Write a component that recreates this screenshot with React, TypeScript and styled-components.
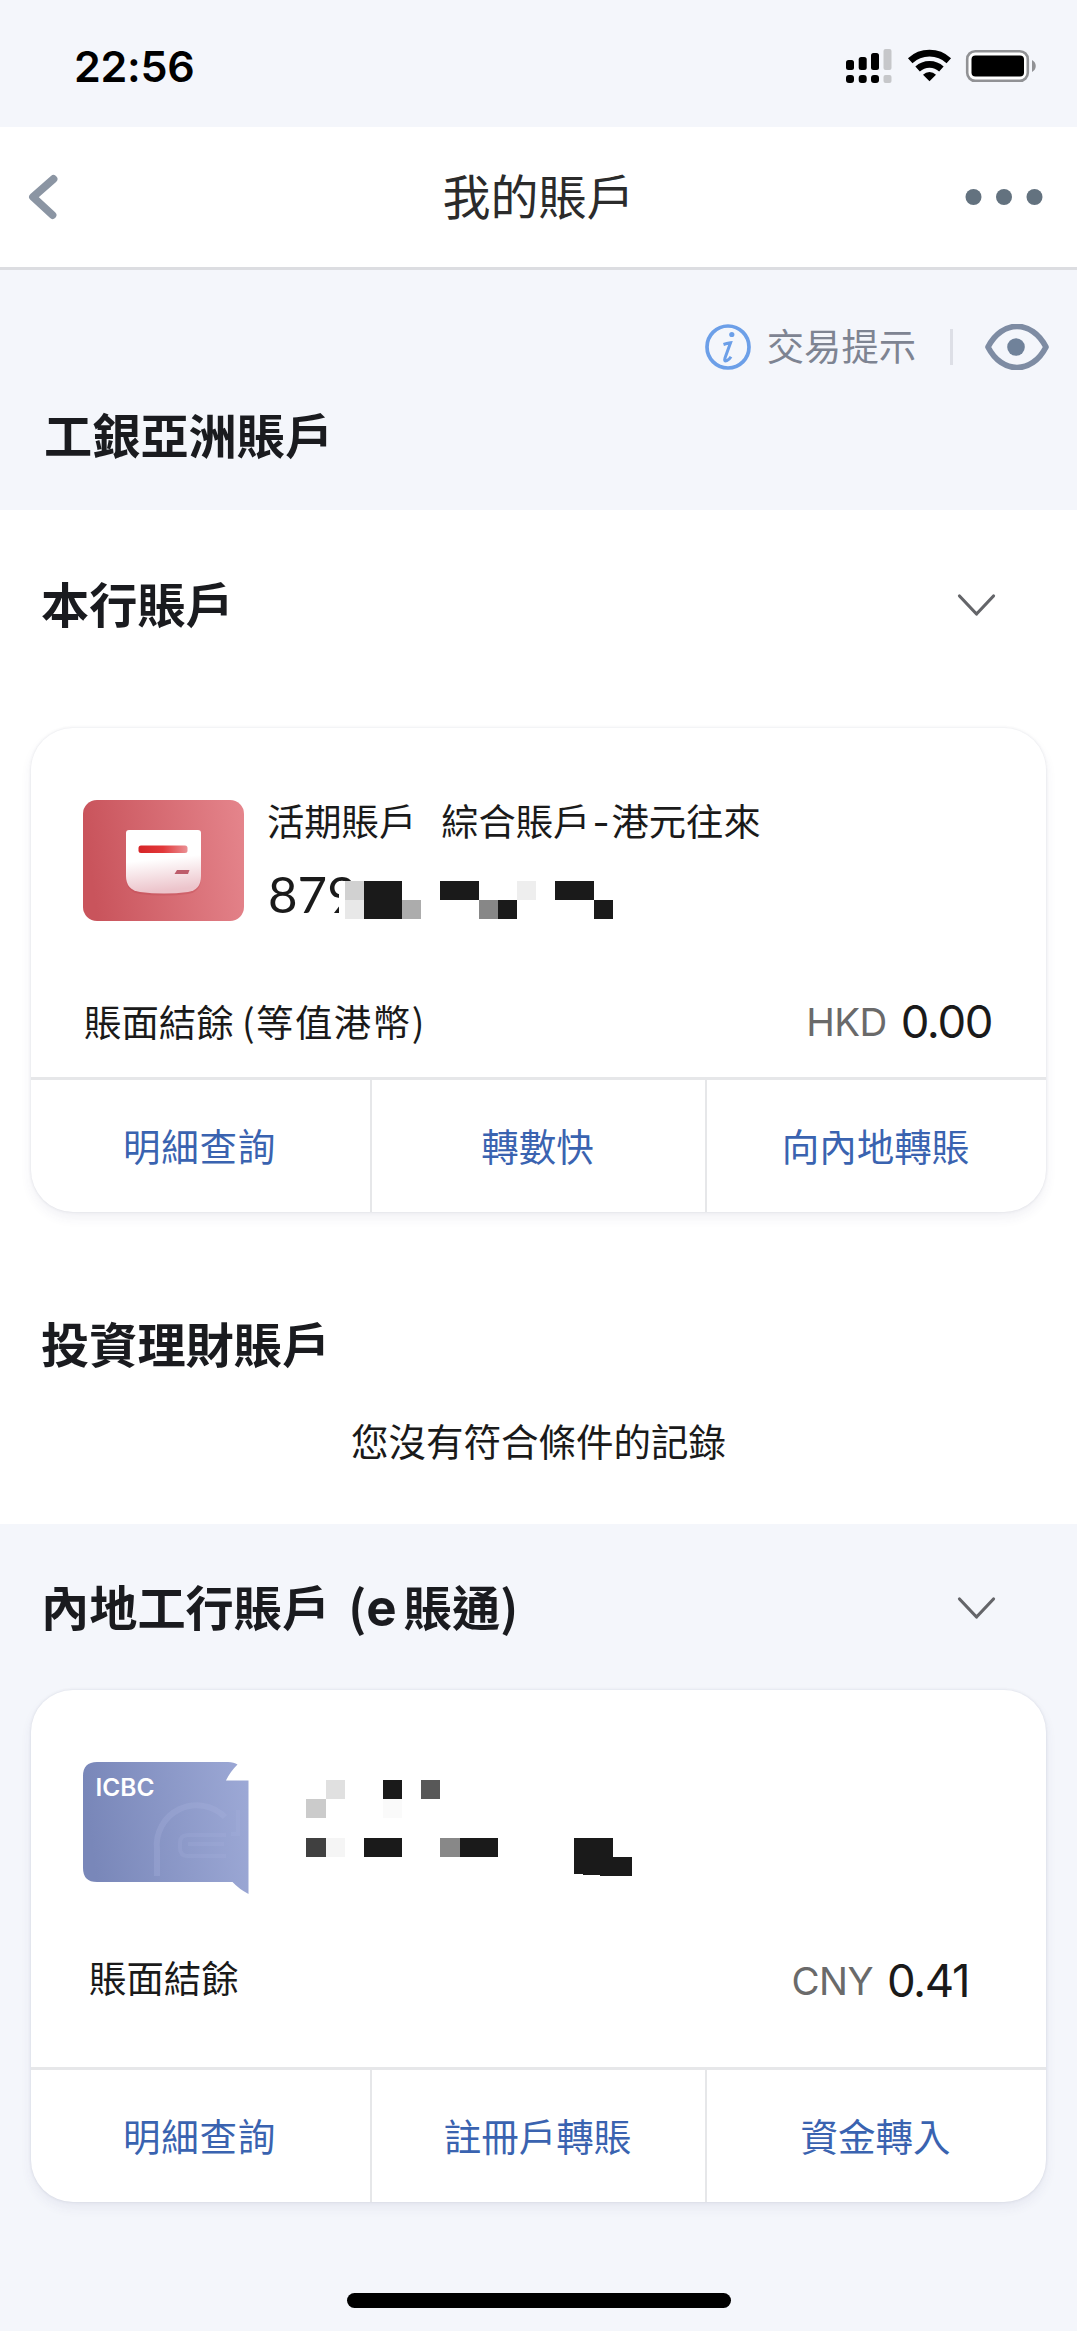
import React from "react";
import styled, { createGlobalStyle } from "styled-components";

const GlobalStyle = createGlobalStyle`
  * { box-sizing: border-box; }
  body {
    margin: 0;
    background: #f4f6fb;
    color: #1a1a1a;
    font-family: "Noto Sans CJK TC", "Inter", sans-serif;
  }
`;

const Screen = styled.div`
  display: flex;
  flex-direction: column;
  width: 1077px;
  height: 2331px;
  overflow: hidden;
  background: #f4f6fb;
`;

const StatusBar = styled.div`
  display: flex;
  justify-content: space-between;
  height: 127px;
  padding: 46px 40px 0 74px;
`;

const Clock = styled.div`
  font: 600 43px/40px "Inter", sans-serif;
  letter-spacing: -0.3px;
  color: #000;
`;

const Indicators = styled.svg`
  display: block;
  width: 193px;
  height: 40px;
`;

const NavBar = styled.header`
  display: grid;
  grid-template-columns: 90px 1fr 90px;
  align-items: center;
  height: 143px;
  padding: 0 28px;
  background: #fff;
  border-bottom: 3px solid #dcdde1;
`;

const NavTitle = styled.h1`
  margin: 0;
  padding-bottom: 6px;
  text-align: center;
  font-size: 48px;
  line-height: 60px;
  font-weight: 400;
  color: #2b2b2b;
`;

const Glyph = styled.svg<{ $end?: boolean }>`
  display: block;
  flex: none;
  justify-self: ${(p) => (p.$end ? "end" : "start")};
`;

const Overview = styled.section`
  height: 240px;
  padding: 47px 28px 0 44px;
`;

const Tools = styled.div`
  display: flex;
  align-items: center;
  justify-content: flex-end;
  height: 60px;
`;

const HintText = styled.span`
  margin: 0 34px 0 16px;
  padding-bottom: 4px;
  font-size: 37.3px;
  line-height: 56px;
  color: #7e8492;
`;

const Rule = styled.i`
  width: 3px;
  height: 36px;
  margin-right: 32px;
  background: #dddfe6;
`;

const Heading = styled.h2`
  margin: 0;
  padding-bottom: 6px;
  font-size: 48.2px;
  line-height: 54px;
  font-weight: 700;
  color: #1a1b1f;
  white-space: nowrap;
`;

const OverviewHeading = styled(Heading)`
  margin-top: 29px;
`;

const Panel = styled.section<{ $height: number; $tinted?: boolean }>`
  height: ${(p) => p.$height}px;
  background: ${(p) => (p.$tinted ? "#f4f6fb" : "#fff")};
`;

const PanelHead = styled.div<{ $top: number }>`
  display: flex;
  align-items: center;
  justify-content: space-between;
  padding: ${(p) => p.$top}px 80px 0 41px;
`;

const SplitHeading = styled(Heading)`
  display: flex;
  align-items: baseline;
  height: 60px;
`;

const Bracket = styled.span`
  margin-left: 18px;
`;

const Latin = styled.span`
  margin-right: 7px;
  font-family: "Inter", sans-serif;
  font-size: 51px;
  font-weight: 700;
`;

const Card = styled.article<{ $gap: number; $height: number }>`
  display: flex;
  flex-direction: column;
  height: ${(p) => p.$height}px;
  margin: ${(p) => p.$gap}px 31px 0;
  border-radius: 42px;
  background: #fff;
  box-shadow: 0 0 3px rgba(40, 50, 80, 0.13), 0 6px 12px rgba(60, 60, 110, 0.07);
`;

const CardTop = styled.div<{ $height: number }>`
  display: flex;
  align-items: flex-start;
  height: ${(p) => p.$height}px;
  padding: 72px 0 0 52px;
`;

const AccountInfo = styled.div`
  margin-left: 23px;
`;

const AccountName = styled.div`
  display: flex;
  gap: 25px;
  font-size: 37.3px;
  line-height: 41px;
`;

const Dash = styled.span`
  padding: 0 2px;
  font-family: "Inter", sans-serif;
  line-height: 1px;
`;

const AccountNumber = styled.div`
  position: relative;
  margin-top: 20px;
  padding-left: 1px;
  font: 400 51px/66px "Lato", sans-serif;
`;

const NumberMask = styled.svg`
  position: absolute;
  left: 0;
  top: 1px;
`;

const Masked = styled.svg`
  display: block;
  margin: 18px 0 0 57px;
`;

const Balance = styled.div<{ $left: number; $right: number }>`
  display: flex;
  align-items: center;
  justify-content: space-between;
  height: 60px;
  padding: 0 ${(p) => p.$right}px 0 ${(p) => p.$left}px;
`;

const BalanceLabel = styled.span<{ $lift?: number }>`
  padding-bottom: ${(p) => p.$lift ?? 0}px;
  font-size: 37.4px;
  line-height: 50px;
`;

const Unit = styled.span`
  letter-spacing: 1.5px;
`;

const Amount = styled.div`
  display: flex;
  align-items: center;
  gap: 14px;
  font-family: "Inter", sans-serif;
`;

const Currency = styled.span`
  font-size: 38.5px;
  line-height: 50px;
  font-weight: 400;
  letter-spacing: -0.6px;
  color: #6a6a6a;
`;

const Value = styled.span`
  font-size: 45.5px;
  line-height: 50px;
  letter-spacing: -1.4px;
`;

const Actions = styled.div`
  display: grid;
  grid-template-columns: 341px 335px 1fr;
  height: 135px;
  margin-top: auto;
  border-top: 3px solid #e6e7e9;
`;

const Action = styled.button<{ $wide?: boolean }>`
  padding: 0 2px 4px 0;
  border: 0;
  border-right: 2px solid #e6e7e9;
  background: none;
  font-family: inherit;
  font-size: 37.5px;
  letter-spacing: ${(p) => (p.$wide ? 0.7 : 0)}px;
  color: #3a63b0;
  &:last-child { border-right: 0; }
`;

const Empty = styled.p`
  margin: 35px 0 0;
  text-align: center;
  font-size: 37.5px;
  line-height: 60px;
`;

const HomeArea = styled.footer`
  display: flex;
  justify-content: center;
  margin-top: auto;
  padding-bottom: 23px;
`;

const HomeBar = styled.div`
  width: 384px;
  height: 15px;
  border-radius: 8px;
  background: #000;
`;

function StatusIcons() {
  return (
    <Indicators viewBox="844 46 193 40">
      <g fill="#000">
        <rect x="846" y="60" width="8" height="10" rx="2.5" />
        <rect x="858.7" y="57" width="8" height="13" rx="2.5" />
        <rect x="871" y="53" width="8" height="17" rx="2.5" />
        <rect x="846" y="75" width="8" height="8" rx="3" />
        <rect x="858.7" y="75" width="8" height="8" rx="3" />
        <rect x="871" y="75" width="8" height="8" rx="3" />
      </g>
      <g fill="#c6c7ca">
        <rect x="883.5" y="49" width="8" height="21" rx="2" />
        <rect x="883.5" y="75" width="8" height="8" rx="2" />
      </g>
      <g fill="none" stroke="#000" strokeWidth="6.6">
        <path d="M910.2 60.700a28.500 28.500 0 0 1 38.600 0" />
        <path d="M917.600 69a17.500 17.500 0 0 1 23.800 0" />
      </g>
      <path d="M929.500 81.300l-6.500-6.500a9.200 9.200 0 0 1 13 0z" fill="#000" />
      <rect x="967.200" y="51.200" width="60.600" height="29.600" rx="8" fill="#fff" stroke="#919295" strokeWidth="2.6" />
      <rect x="971.500" y="55.500" width="52.500" height="21" rx="4" fill="#000" />
      <path d="M1032 60c5 2.500 5 9.500 0 12z" fill="#919295" />
    </Indicators>
  );
}

function Chevron() {
  return (
    <Glyph width="42" height="26" viewBox="0 0 42 26" fill="none" stroke="#646569" strokeWidth="3.2" strokeLinecap="round" strokeLinejoin="round">
      <path d="M4.500 4L21.500 22L38.500 4" />
    </Glyph>
  );
}

function SavingsTile() {
  return (
    <Glyph width="161" height="121" viewBox="0 0 161 121">
      <defs>
        <linearGradient id="red" x1="0" y1="0.1" x2="1" y2="0">
          <stop offset="0" stopColor="#c9545c" />
          <stop offset="1" stopColor="#e5858c" />
        </linearGradient>
        <linearGradient id="paper" x1="0" y1="0" x2="0.12" y2="1">
          <stop offset="0.5" stopColor="#fff" />
          <stop offset="1" stopColor="#ecc4cb" />
        </linearGradient>
        <linearGradient id="stripe">
          <stop offset="0" stopColor="#d62427" />
          <stop offset="0.5" stopColor="#e2383a" />
          <stop offset="1" stopColor="#ea9094" />
        </linearGradient>
      </defs>
      <rect width="161" height="121" rx="14" fill="url(#red)" />
      <path d="M46 30h69q3 0 3 3v43q0 14-13 16q-24 3-48 0q-14-2-14-16V33q0-3 3-3z" transform="translate(0 2)" fill="#b9434d" opacity="0.3" />
      <path d="M46 30h69q3 0 3 3v43q0 14-13 16q-24 3-48 0q-14-2-14-16V33q0-3 3-3z" fill="url(#paper)" />
      <rect x="55.500" y="45.500" width="49" height="7.500" rx="2.500" fill="url(#stripe)" />
      <path d="M94 70h12.500l-1.500 4H91.500z" fill="#bd5d6b" />
    </Glyph>
  );
}

const TileLabel = styled.text`
  font: 600 24px "Inter", sans-serif;
  fill: #fff;
`;

function IcbcTile() {
  return (
    <Glyph width="166" height="133" viewBox="0 0 166 133">
      <defs>
        <linearGradient id="blue" x1="0" y1="0.1" x2="1" y2="0">
          <stop offset="0" stopColor="#7987b9" />
          <stop offset="1" stopColor="#9da9d6" />
        </linearGradient>
      </defs>
      <path d="M14 0H145q6 0 9.500 2.500Q147 10 143 18.500H165.500V132Q156 127 149.500 120H14Q0 120 0 106V14Q0 0 14 0z" fill="url(#blue)" />
      <g fill="none" stroke="#a9b4df" strokeOpacity="0.3" strokeWidth="6">
        <path d="M74 114V88a40 40 0 0 1 68-33" />
        <path d="M143 73H105q-8 0-8 8v5q0 8 8 8h38M105 82h36M155 48v24h-7" strokeWidth="4" strokeOpacity="0.2" />
      </g>
      <TileLabel x="12.500" y="33.500" textLength="59" lengthAdjust="spacingAndGlyphs">ICBC</TileLabel>
    </Glyph>
  );
}

export default function App() {
  return (
    <>
      <GlobalStyle />
      <Screen>
        <StatusBar>
          <Clock>22:56</Clock>
          <StatusIcons />
        </StatusBar>

        <NavBar>
          <Glyph width="32" height="46" viewBox="0 0 32 46" fill="none" stroke="#8b95a3" strokeWidth="7.800" strokeLinecap="round" strokeLinejoin="round">
            <path d="M25.500 5L5 23L24.500 41" />
          </Glyph>
          <NavTitle>我的賬戶</NavTitle>
          <Glyph $end width="84" height="18" viewBox="0 0 84 18" fill="#63727f">
            <circle cx="8.500" cy="9" r="8" />
            <circle cx="39" cy="9" r="8" />
            <circle cx="69.500" cy="9" r="8" />
          </Glyph>
        </NavBar>

        <Overview>
          <Tools>
            <Glyph width="46" height="46" viewBox="0 0 46 46" fill="none" stroke="#6c9fe8">
              <circle cx="23" cy="23" r="21" strokeWidth="3.700" />
              <circle cx="26.800" cy="10.500" r="2.600" fill="#6c9fe8" stroke="none" />
              <path d="M18.500 20.500q3-1 7-1.700L20 34q-1.200 4 1.800 2.700q2.500-1.200 4.200-4" strokeWidth="3" />
            </Glyph>
            <HintText>交易提示</HintText>
            <Rule />
            <Glyph width="64" height="46" viewBox="0 0 64 46">
              <path d="M3 23C17-4.500 47-4.500 61 23C47 50.500 17 50.500 3 23z" fill="none" stroke="#7e8ca3" strokeWidth="5.700" strokeLinejoin="round" />
              <circle cx="31" cy="23" r="8.800" fill="#70829a" />
            </Glyph>
          </Tools>
          <OverviewHeading>工銀亞洲賬戶</OverviewHeading>
        </Overview>

        <Panel $height={748}>
          <PanelHead $top={65}>
            <Heading>本行賬戶</Heading>
            <Chevron />
          </PanelHead>
          <Card $gap={93} $height={484}>
            <CardTop $height={264}>
              <SavingsTile />
              <AccountInfo>
                <AccountName>
                  <span>活期賬戶</span>
                  <span>綜合賬戶<Dash>-</Dash>港元往來</span>
                </AccountName>
                <AccountNumber>
                  879
                  <NumberMask width="350" height="66" viewBox="267 862 350 66" shapeRendering="crispEdges">
                    <path d="M339 881h22v46h-22z" fill="#fff" />
                    <path d="M345 881h19v19h-19z" fill="#d1d1d1" />
                    <path d="M345 900h19v19h-19z" fill="#e8e8e8" />
                    <path d="M364 881h38v38h-38zM440 881h39v19h-39zM498 900h19v19h-19zM555 881h39v19h-39zM594 900h19v19h-19z" fill="#1a1a1a" />
                    <path d="M402 900h19v19h-19z" fill="#acacac" />
                    <path d="M479 900h19v19h-19z" fill="#878787" />
                    <path d="M517 881h19v19h-19z" fill="#eee" />
                  </NumberMask>
                </AccountNumber>
              </AccountInfo>
            </CardTop>
            <Balance $left={53} $right={54}>
              <BalanceLabel $lift={2}>
                賬面結餘 <Unit>(等值港幣)</Unit>
              </BalanceLabel>
              <Amount>
                <Currency>HKD</Currency>
                <Value>0.00</Value>
              </Amount>
            </Balance>
            <Actions>
              <Action $wide>明細查詢</Action>
              <Action>轉數快</Action>
              <Action>向內地轉賬</Action>
            </Actions>
          </Card>
        </Panel>

        <Panel $height={266}>
          <PanelHead $top={57}>
            <Heading>投資理財賬戶</Heading>
          </PanelHead>
          <Empty>您沒有符合條件的記錄</Empty>
        </Panel>

        <Panel $height={700} $tinted>
          <PanelHead $top={54}>
            <SplitHeading>
              內地工行賬戶
              <Bracket>(</Bracket>
              <Latin>e</Latin>
              <span>賬通)</span>
            </SplitHeading>
            <Chevron />
          </PanelHead>
          <Card $gap={52} $height={512}>
            <CardTop $height={261}>
              <IcbcTile />
              <Masked width="328" height="98" viewBox="306 1780 328 98" shapeRendering="crispEdges">
                <path d="M326 1780h19v19h-19z" fill="#e0e0e0" />
                <path d="M306 1799h20v19h-20z" fill="#cbcbcb" />
                <path d="M421 1780h19v19h-19z" fill="#585858" />
                <path d="M383 1799h19v19h-19z" fill="#fafafa" />
                <path d="M306 1838h20v19h-20z" fill="#404040" />
                <path d="M326 1838h19v19h-19z" fill="#f5f5f5" />
                <path d="M440 1838h20v19h-20z" fill="#888" />
                <path d="M383 1780h19v19h-19zM364 1838h38v19h-38zM460 1838h38v19h-38zM574 1838h39v19h19v19h-24l-34-2z" fill="#1a1a1a" />
              </Masked>
            </CardTop>
            <Balance $left={58} $right={77}>
              <BalanceLabel $lift={9}>賬面結餘</BalanceLabel>
              <Amount>
                <Currency>CNY</Currency>
                <Value>0.41</Value>
              </Amount>
            </Balance>
            <Actions>
              <Action $wide>明細查詢</Action>
              <Action>註冊戶轉賬</Action>
              <Action>資金轉入</Action>
            </Actions>
          </Card>
        </Panel>

        <HomeArea>
          <HomeBar />
        </HomeArea>
      </Screen>
    </>
  );
}
